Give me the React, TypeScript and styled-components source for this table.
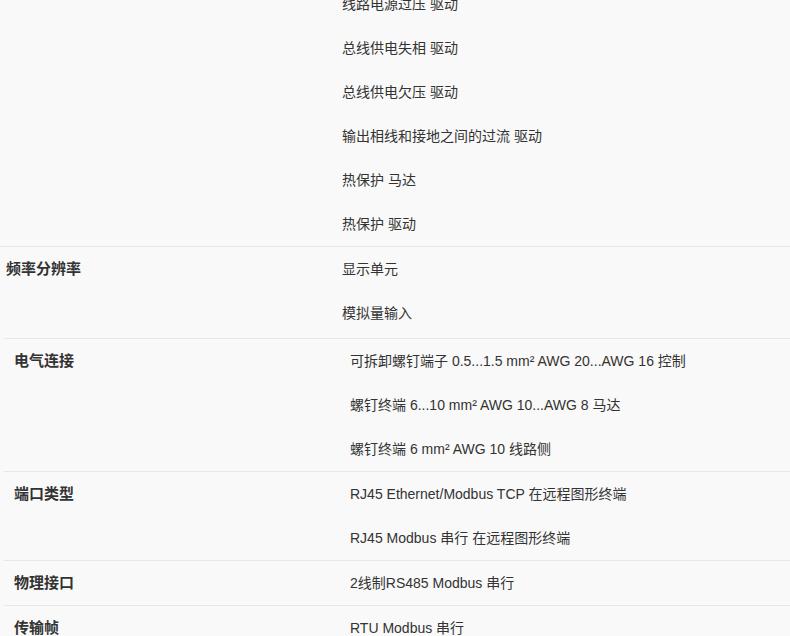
import React from "react";
import styled, { createGlobalStyle } from "styled-components";

const GlobalStyle = createGlobalStyle`
  html, body {
    margin: 0;
    padding: 0;
    background: #f9f9f9;
  }
  body {
    font-family: "Liberation Sans", "Noto Sans CJK SC", sans-serif;
    color: #333;
  }
`;

const Page = styled.div`
  width: 790px;
  height: 636px;
  overflow: hidden;
  background: #f9f9f9;
`;

const Scroller = styled.div`
  margin-top: -18px;
`;

const Group = styled.section<{ $inset: number; $bottom?: number }>`
  display: flex;
  flex-direction: column;
  margin-left: ${(p) => p.$inset}px;
  padding-bottom: ${(p) => p.$bottom ?? 0}px;
`;

const Row = styled.div<{ $labelCol: number; $noBorder?: boolean }>`
  display: grid;
  grid-template-columns: ${(p) => p.$labelCol}px 1fr;
  border-top: ${(p) => (p.$noBorder ? "none" : "1px solid #e7e7e7")};
`;

const Label = styled.div<{ $pad: number }>`
  padding: 12px 0 12px ${(p) => p.$pad}px;
  font-size: 15px;
  font-weight: bold;
  line-height: 20px;
  color: #333;
`;

const Values = styled.ul`
  list-style: none;
  margin: 0;
  padding: 0;
  display: flex;
  flex-direction: column;
`;

const Value = styled.li`
  padding: 12px 0;
  font-size: 14px;
  line-height: 20px;
  color: #333;
  white-space: nowrap;
`;

type Spec = { label: string; values: string[] };

const topSpecs: Spec[] = [
  {
    label: "",
    values: [
      "线路电源过压 驱动",
      "总线供电失相 驱动",
      "总线供电欠压 驱动",
      "输出相线和接地之间的过流 驱动",
      "热保护 马达",
      "热保护 驱动",
    ],
  },
  { label: "频率分辨率", values: ["显示单元", "模拟量输入"] },
];

const bottomSpecs: Spec[] = [
  {
    label: "电气连接",
    values: [
      "可拆卸螺钉端子 0.5...1.5 mm² AWG 20...AWG 16 控制",
      "螺钉终端 6...10 mm² AWG 10...AWG 8 马达",
      "螺钉终端 6 mm² AWG 10 线路侧",
    ],
  },
  {
    label: "端口类型",
    values: ["RJ45 Ethernet/Modbus TCP 在远程图形终端", "RJ45 Modbus 串行 在远程图形终端"],
  },
  { label: "物理接口", values: ["2线制RS485 Modbus 串行"] },
  { label: "传输帧", values: ["RTU Modbus 串行"] },
];

const SpecRows: React.FC<{ specs: Spec[]; labelCol: number; pad: number; firstNoBorder?: boolean }> = ({
  specs,
  labelCol,
  pad,
  firstNoBorder,
}) => (
  <>
    {specs.map((s, i) => (
      <Row key={i} $labelCol={labelCol} $noBorder={firstNoBorder && i === 0}>
        <Label $pad={pad}>{s.label}</Label>
        <Values>
          {s.values.map((v, j) => (
            <Value key={j}>{v}</Value>
          ))}
        </Values>
      </Row>
    ))}
  </>
);

export default function App() {
  return (
    <>
      <GlobalStyle />
      <Page>
        <Scroller>
          <Group $inset={0} $bottom={3}>
            <SpecRows specs={topSpecs} labelCol={342} pad={6} firstNoBorder />
          </Group>
          <Group $inset={4}>
            <SpecRows specs={bottomSpecs} labelCol={346} pad={10} />
          </Group>
        </Scroller>
      </Page>
    </>
  );
}
